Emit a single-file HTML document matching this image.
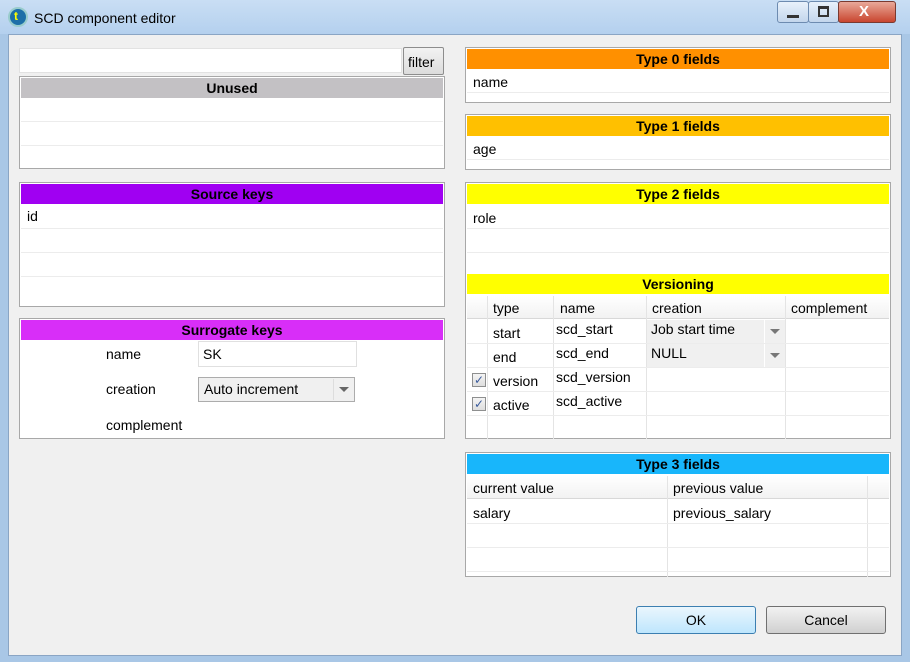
<!DOCTYPE html>
<html><head><style>
*{box-sizing:border-box;margin:0;padding:0}
body{width:910px;height:662px;position:relative;overflow:hidden;font-family:"Liberation Sans",sans-serif;font-size:14px;color:#000;background:#a9c7e6}
div{position:absolute}
.t{white-space:nowrap}
.panel{background:#fff;border:1px solid #a8a8a8}
.hd{left:1px;right:1px;height:20px;text-align:center;font-weight:bold;line-height:20px;font-size:14px}
.ln{height:1px;background:#ececec}
.vl{width:1px;background:#ececec}
</style></head><body>
<div style="left:0;top:0;width:910px;height:34px;background:linear-gradient(#c9def4,#b4d0ee)"></div>
<div style="left:8px;top:7px;width:20px;height:20px;border-radius:50%;background:#1d6fa8;border:2px solid #9cc"></div>
<div class="t" style="left:14px;top:9px;color:#ff0;font-weight:bold;font-size:12px">t</div>
<div class="t" style="left:34px;top:10px;font-size:14px">SCD component editor</div>
<div style="left:777px;top:1px;width:32px;height:22px;border:1px solid #6d8bb0;border-radius:3px;background:linear-gradient(#e8f1fb,#c3d6ec)"></div>
<div style="left:787px;top:15px;width:12px;height:3px;background:#333"></div>
<div style="left:808px;top:1px;width:31px;height:22px;border:1px solid #6d8bb0;border-radius:3px;background:linear-gradient(#e8f1fb,#c3d6ec)"></div>
<div style="left:818px;top:6px;width:11px;height:11px;border:2px solid #333;border-top-width:3px"></div>
<div style="left:838px;top:1px;width:58px;height:22px;border:1px solid #7a3a30;border-radius:3px;background:linear-gradient(#e9a99a,#c9462f)"></div>
<div class="t" style="left:859px;top:3px;color:#fff;font-weight:bold;font-size:15px">X</div>
<div style="left:8px;top:34px;width:894px;height:622px;background:#f0f0f0;border:1px solid #8aa5c4"></div>

<div style="left:19px;top:48px;width:383px;height:25px;background:#fff;border:1px solid #e2e2e2"></div>
<div style="left:403px;top:47px;width:41px;height:28px;border:1px solid #8d8d8d;border-radius:2px;background:linear-gradient(#f2f2f2,#dcdcdc)"></div>
<div class="t" style="left:408px;top:54px">filter</div>

<div class="panel" style="left:19px;top:76px;width:426px;height:93px">
<div class="hd" style="top:1px;background:#c3c1c4">Unused</div>
<div class="ln" style="left:1px;right:1px;top:44px"></div>
<div class="ln" style="left:1px;right:1px;top:68px"></div>
</div>

<div class="panel" style="left:19px;top:182px;width:426px;height:125px">
<div class="hd" style="top:1px;background:#a000f2">Source keys</div>
<div class="t" style="left:7px;top:25px">id</div>
<div class="ln" style="left:1px;right:1px;top:45px"></div>
<div class="ln" style="left:1px;right:1px;top:69px"></div>
<div class="ln" style="left:1px;right:1px;top:93px"></div>
</div>

<div class="panel" style="left:19px;top:318px;width:426px;height:121px">
<div class="hd" style="top:1px;background:#d82ef8">Surrogate keys</div>
<div class="t" style="left:86px;top:27px">name</div>
<div style="left:178px;top:22px;width:159px;height:26px;border:1px solid #e0e0e0;background:#fff"></div>
<div class="t" style="left:183px;top:27px">SK</div>
<div class="t" style="left:86px;top:62px">creation</div>
<div style="left:178px;top:58px;width:157px;height:25px;border:1px solid #acacac;background:#f0f0f0"></div>
<div style="left:313px;top:60px;width:1px;height:21px;background:#ddd"></div>
<div class="t" style="left:184px;top:62px">Auto increment</div>
<div style="left:319px;top:68px;border-left:5px solid transparent;border-right:5px solid transparent;border-top:5px solid #666"></div>
<div class="t" style="left:86px;top:98px">complement</div>
</div>

<div class="panel" style="left:465px;top:47px;width:426px;height:56px">
<div class="hd" style="top:1px;background:#ff9000">Type 0 fields</div>
<div class="t" style="left:7px;top:26px">name</div>
<div class="ln" style="left:1px;right:1px;top:44px"></div>
</div>
<div class="panel" style="left:465px;top:114px;width:426px;height:56px">
<div class="hd" style="top:1px;background:#ffc000">Type 1 fields</div>
<div class="t" style="left:7px;top:26px">age</div>
<div class="ln" style="left:1px;right:1px;top:44px"></div>
</div>

<div class="panel" style="left:465px;top:182px;width:426px;height:257px">
<div class="hd" style="top:1px;background:#ffff00">Type 2 fields</div>
<div class="t" style="left:7px;top:27px">role</div>
<div class="ln" style="left:1px;right:1px;top:45px"></div>
<div class="ln" style="left:1px;right:1px;top:69px"></div>
<div class="hd" style="top:91px;background:#ffff00">Versioning</div>
<div style="left:1px;right:1px;top:113px;height:23px;background:linear-gradient(#fff,#f2f2f2);border-bottom:1px solid #d8d8d8"></div>
<div class="vl" style="left:21px;top:113px;height:143px;background:#e4e4e4"></div>
<div class="vl" style="left:87px;top:113px;height:143px;background:#e4e4e4"></div>
<div class="vl" style="left:180px;top:113px;height:143px;background:#e4e4e4"></div>
<div class="vl" style="left:319px;top:113px;height:143px;background:#e4e4e4"></div>
<div class="t" style="left:27px;top:117px">type</div>
<div class="t" style="left:94px;top:117px">name</div>
<div class="t" style="left:186px;top:117px">creation</div>
<div class="t" style="left:325px;top:117px">complement</div>
<div style="left:181px;top:137px;width:138px;height:48px;background:#f0f0f0"></div>
<div style="left:298px;top:137px;width:1px;height:48px;background:#fff"></div>
<div style="left:304px;top:146px;border-left:5px solid transparent;border-right:5px solid transparent;border-top:5px solid #777"></div>
<div style="left:304px;top:170px;border-left:5px solid transparent;border-right:5px solid transparent;border-top:5px solid #777"></div>
<div class="ln" style="left:1px;right:1px;top:160px"></div>
<div class="ln" style="left:1px;right:1px;top:184px"></div>
<div class="ln" style="left:1px;right:1px;top:208px"></div>
<div class="ln" style="left:1px;right:1px;top:232px"></div>
<div class="t" style="left:27px;top:142px">start</div>
<div class="t" style="left:90px;top:138px">scd_start</div>
<div class="t" style="left:185px;top:138px">Job start time</div>
<div class="t" style="left:27px;top:166px">end</div>
<div class="t" style="left:90px;top:162px">scd_end</div>
<div class="t" style="left:185px;top:162px">NULL</div>
<div style="left:6px;top:190px;width:14px;height:14px;border:1px solid #8e8f8f;background:linear-gradient(#f4f4f4,#dedede);color:#3a5b9c;font-size:12px;line-height:12px;text-align:center">✓</div>
<div class="t" style="left:27px;top:190px">version</div>
<div class="t" style="left:90px;top:186px">scd_version</div>
<div style="left:6px;top:214px;width:14px;height:14px;border:1px solid #8e8f8f;background:linear-gradient(#f4f4f4,#dedede);color:#3a5b9c;font-size:12px;line-height:12px;text-align:center">✓</div>
<div class="t" style="left:27px;top:214px">active</div>
<div class="t" style="left:90px;top:210px">scd_active</div>
</div>

<div class="panel" style="left:465px;top:452px;width:426px;height:125px">
<div class="hd" style="top:1px;background:#18b6fb">Type 3 fields</div>
<div style="left:1px;right:1px;top:23px;height:23px;background:linear-gradient(#fff,#f2f2f2);border-bottom:1px solid #d8d8d8"></div>
<div class="vl" style="left:201px;top:23px;height:101px;background:#e4e4e4"></div>
<div class="vl" style="left:401px;top:23px;height:101px;background:#e4e4e4"></div>
<div class="t" style="left:7px;top:27px">current value</div>
<div class="t" style="left:207px;top:27px">previous value</div>
<div class="t" style="left:7px;top:52px">salary</div>
<div class="t" style="left:207px;top:52px">previous_salary</div>
<div class="ln" style="left:1px;right:1px;top:70px"></div>
<div class="ln" style="left:1px;right:1px;top:94px"></div>
<div class="ln" style="left:1px;right:1px;top:118px"></div>
</div>

<div style="left:636px;top:606px;width:120px;height:28px;border:1px solid #3c7fb1;border-radius:3px;background:linear-gradient(#eaf6fd,#bee6fd)"></div>
<div class="t" style="left:636px;top:612px;width:120px;text-align:center">OK</div>
<div style="left:766px;top:606px;width:120px;height:28px;border:1px solid #707070;border-radius:3px;background:linear-gradient(#f2f2f2,#d0d0d0)"></div>
<div class="t" style="left:766px;top:612px;width:120px;text-align:center">Cancel</div>
</body></html>
